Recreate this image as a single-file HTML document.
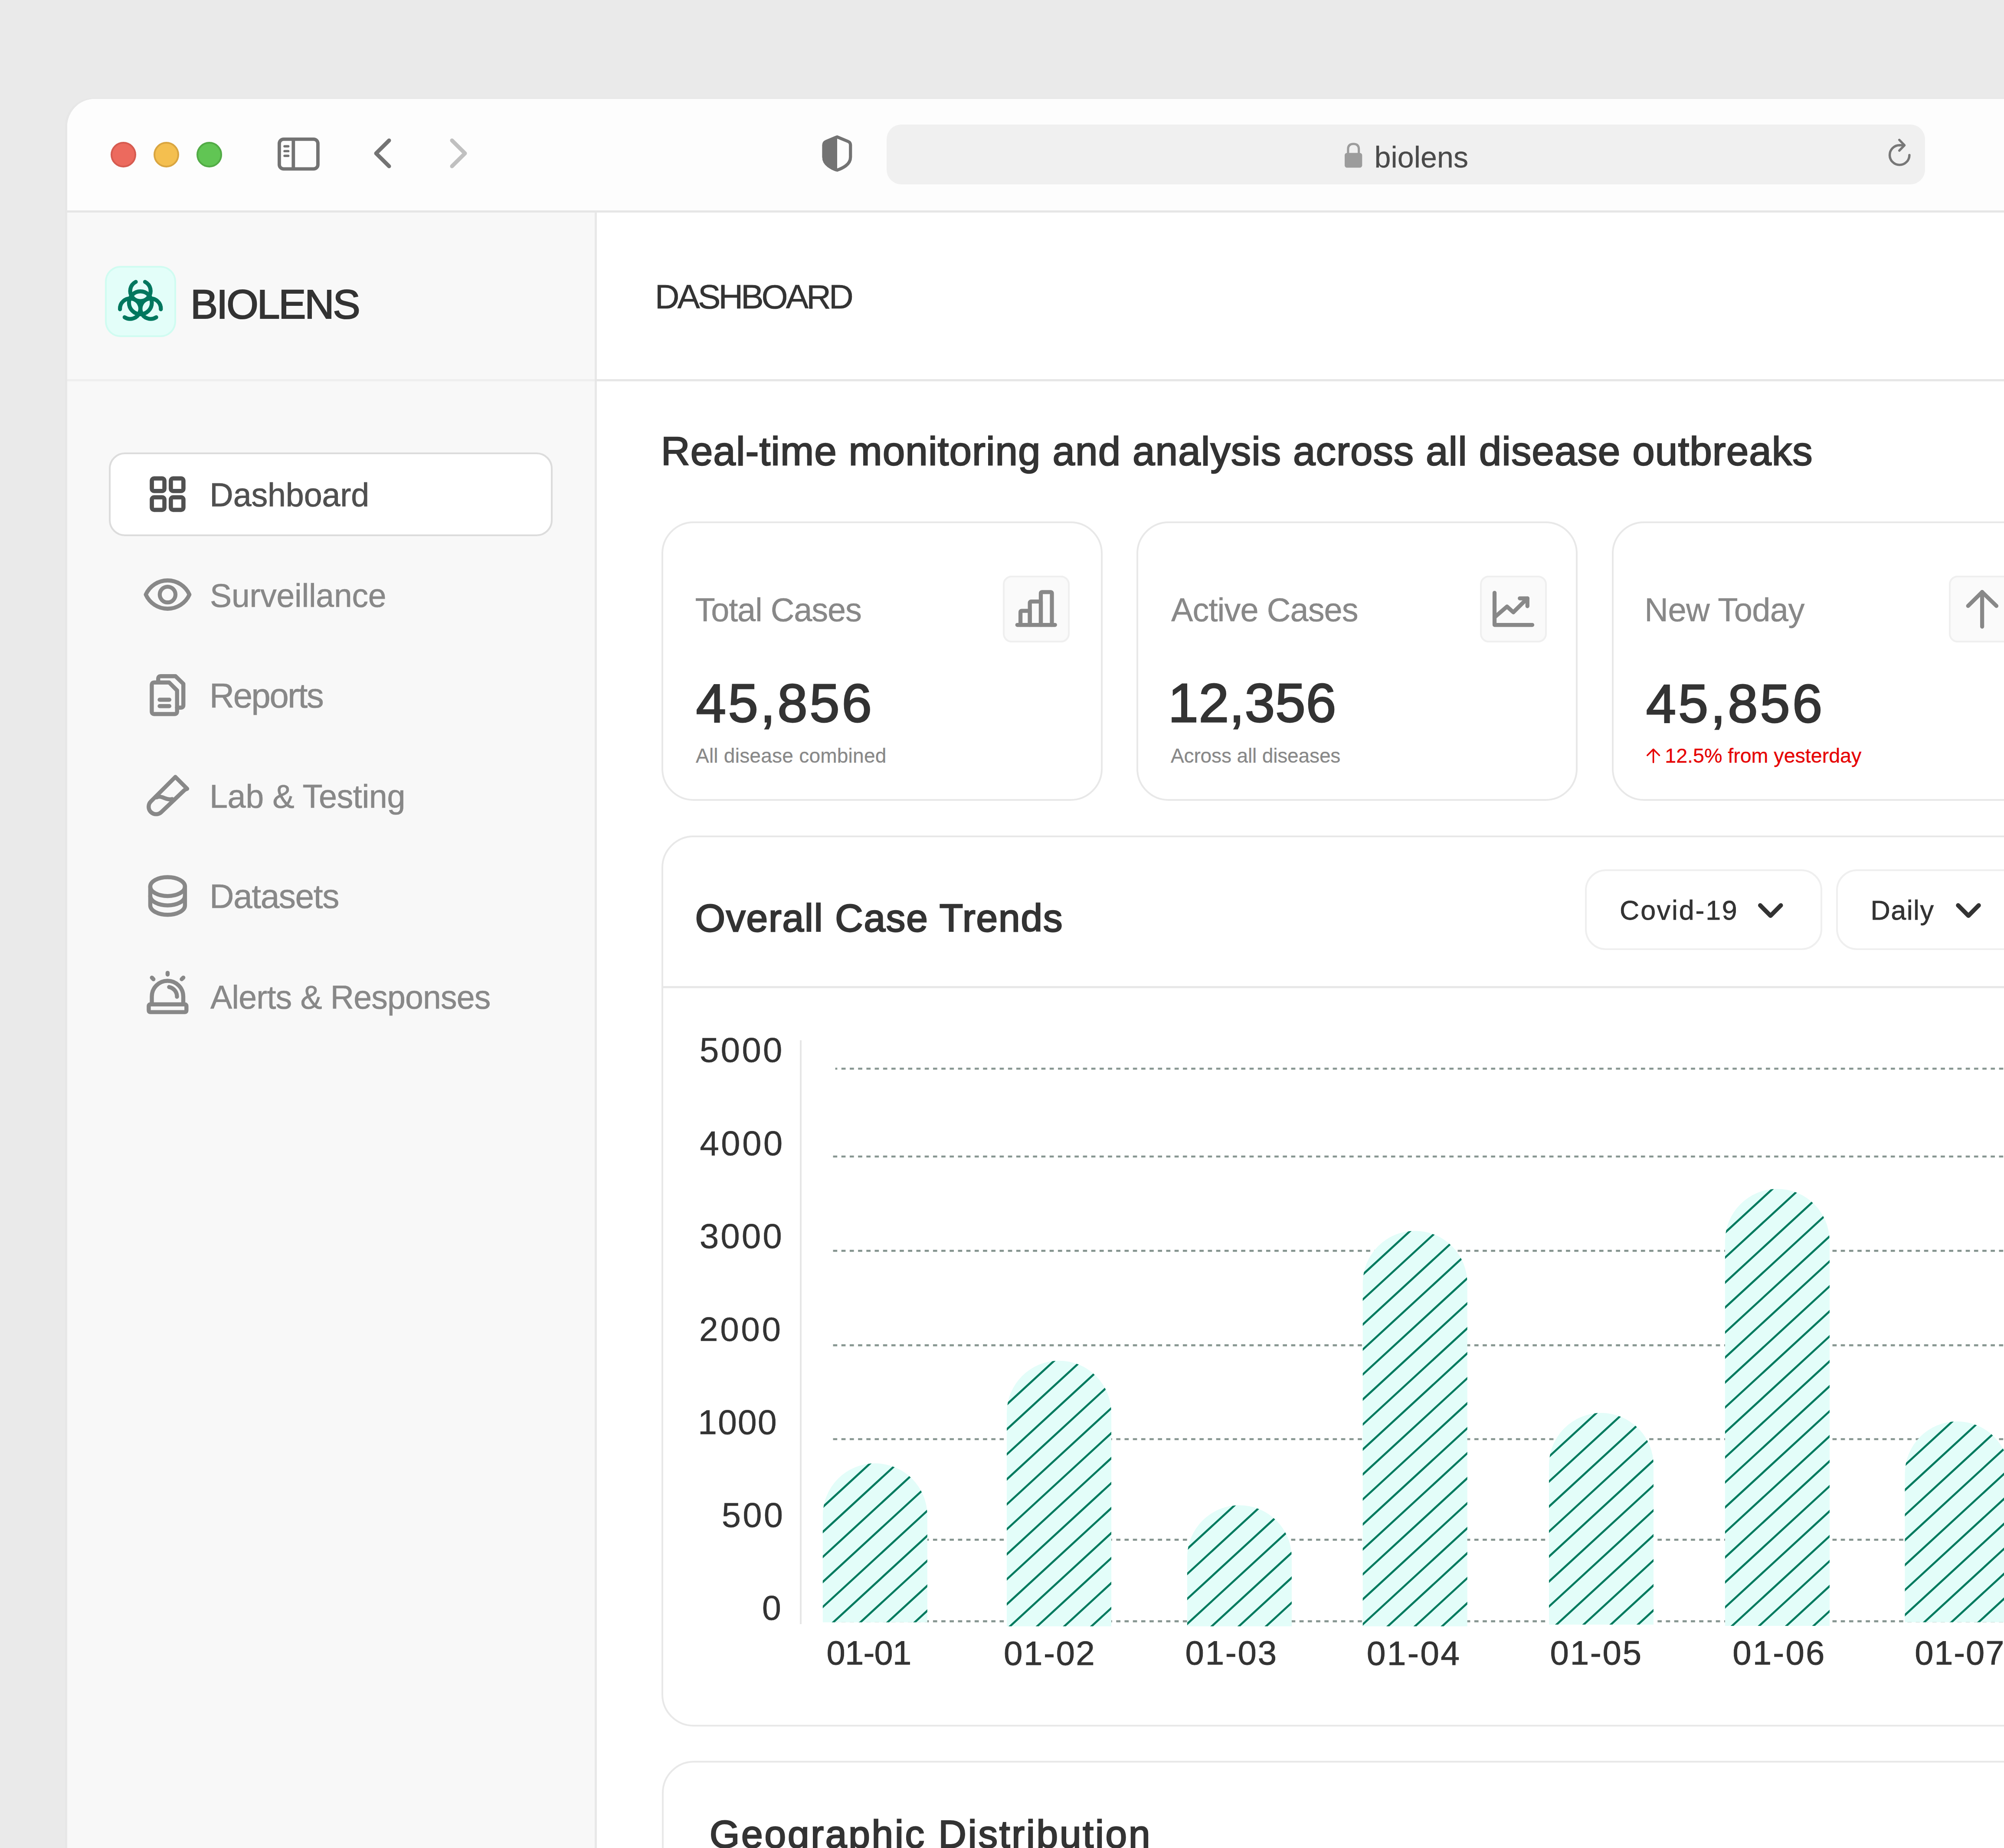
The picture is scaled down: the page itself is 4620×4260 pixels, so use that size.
<!DOCTYPE html>
<html><head><meta charset="utf-8"><style>
html,body{margin:0;padding:0;}
body{width:4620px;height:4260px;overflow:hidden;background:#eaeaea;position:relative;font-family:"Liberation Sans", sans-serif;}
.t{position:absolute;white-space:nowrap;font-weight:400;}
svg.ov{position:absolute;left:0;top:0;}
</style></head><body>
<div style="position:absolute;left:155px;top:228px;width:4565px;height:4172px;background:#ffffff;border-radius:64px 0 0 0;box-sizing:border-box;box-shadow:-5px -2px 0 0 #e7e7e7;"></div>
<div style="position:absolute;left:155px;top:228px;width:4565px;height:258px;background:#fdfdfd;border-radius:64px 0 0 0;box-sizing:border-box;"></div>
<div style="position:absolute;left:155px;top:485px;width:4565px;height:4.800000000000011px;background:#e6e6e6;border-radius:0;box-sizing:border-box;"></div>
<div style="position:absolute;left:254.5px;top:327.0px;width:59px;height:59px;border-radius:50%;background:#ec6a5e;box-sizing:border-box;border:4.5px solid #d65b50;"></div>
<div style="position:absolute;left:353.5px;top:327.0px;width:59px;height:59px;border-radius:50%;background:#f4bf4f;box-sizing:border-box;border:4.5px solid #d9a540;"></div>
<div style="position:absolute;left:452.5px;top:327.0px;width:59px;height:59px;border-radius:50%;background:#61c554;box-sizing:border-box;border:4.5px solid #52ab46;"></div>
<div style="position:absolute;left:2044px;top:287px;width:2394px;height:138px;background:#f0f0f0;border-radius:34px;box-sizing:border-box;"></div>
<div class="t" id="url" style="left:3168.54px;top:327.99px;font-size:68.02px;line-height:68.02px;color:#4a4a4a;letter-spacing:0.173px;-webkit-text-stroke:0.3px #4a4a4a;">biolens</div>
<div style="position:absolute;left:155px;top:489.8px;width:1217px;height:3910.2px;background:#f8f8f8;border-radius:0;box-sizing:border-box;"></div>
<div style="position:absolute;left:1371.2px;top:489.8px;width:4.399999999999864px;height:3910.2px;background:#e8e8e8;border-radius:0;box-sizing:border-box;"></div>
<div style="position:absolute;left:155px;top:874.2px;width:1216.2px;height:4.7999999999999545px;background:#efefef;border-radius:0;box-sizing:border-box;"></div>
<div style="position:absolute;left:1371.2px;top:874.2px;width:3348.8px;height:4.7999999999999545px;background:#e6e6e6;border-radius:0;box-sizing:border-box;"></div>
<div style="position:absolute;left:242px;top:613px;width:164px;height:164px;background:#e3fef9;border:4.6px solid #d0fcf1;border-radius:36px;box-sizing:border-box;"></div>
<div class="t" id="biolens_logo" style="left:438.98px;top:653.85px;font-size:94.65px;line-height:94.65px;color:#333333;letter-spacing:-3.109px;-webkit-text-stroke:2.2px #333333;">BIOLENS</div>
<div style="position:absolute;left:251px;top:1043px;width:1023px;height:193px;background:#ffffff;border:4.8px solid #dcdcdc;border-radius:37px;box-sizing:border-box;"></div>
<div class="t" id="nav0" style="left:483.32px;top:1104.08px;font-size:75.35px;line-height:75.35px;color:#505050;letter-spacing:-0.095px;-webkit-text-stroke:0.9px #505050;">Dashboard</div>
<div class="t" id="nav1" style="left:484.05px;top:1336.15px;font-size:75.04px;line-height:75.04px;color:#888888;letter-spacing:-0.211px;-webkit-text-stroke:0.7px #888888;">Surveillance</div>
<div class="t" id="nav2" style="left:482.85px;top:1564.11px;font-size:79.49px;line-height:79.49px;color:#888888;letter-spacing:-2.418px;-webkit-text-stroke:0.7px #888888;">Reports</div>
<div class="t" id="nav3" style="left:482.97px;top:1798.99px;font-size:75.50px;line-height:75.50px;color:#888888;letter-spacing:-0.392px;-webkit-text-stroke:0.7px #888888;">Lab &amp; Testing</div>
<div class="t" id="nav4" style="left:483.00px;top:2027.44px;font-size:78.27px;line-height:78.27px;color:#888888;letter-spacing:-1.363px;-webkit-text-stroke:0.7px #888888;">Datasets</div>
<div class="t" id="nav5" style="left:485.00px;top:2262.28px;font-size:75.18px;line-height:75.18px;color:#888888;letter-spacing:-0.805px;-webkit-text-stroke:0.7px #888888;">Alerts &amp; Responses</div>
<div class="t" id="hdr" style="left:1509.83px;top:644.72px;font-size:78.49px;line-height:78.49px;color:#333333;letter-spacing:-4.923px;-webkit-text-stroke:0.6px #333333;">DASHBOARD</div>
<div class="t" id="sub" style="left:1523.84px;top:993.56px;font-size:92.63px;line-height:92.63px;color:#333333;letter-spacing:1.067px;-webkit-text-stroke:2.4px #333333;">Real-time monitoring and analysis across all disease outbreaks</div>
<div style="position:absolute;left:1525px;top:1202px;width:1017px;height:644px;background:#fff;border:4.8px solid #e8e8e8;border-radius:74px;box-sizing:border-box;"></div>
<div style="position:absolute;left:2620px;top:1202px;width:1017px;height:644px;background:#fff;border:4.8px solid #e8e8e8;border-radius:74px;box-sizing:border-box;"></div>
<div style="position:absolute;left:3715.5px;top:1202px;width:1017.0px;height:644px;background:#fff;border:4.8px solid #e8e8e8;border-radius:74px;box-sizing:border-box;"></div>
<div style="position:absolute;left:2311.7px;top:1327.2px;width:154.0px;height:154.29999999999995px;background:#fafafa;border:4.7px solid #efefef;border-radius:20px;box-sizing:border-box;"></div>
<div style="position:absolute;left:3411.7px;top:1327.2px;width:154.0px;height:154.29999999999995px;background:#fafafa;border:4.7px solid #efefef;border-radius:20px;box-sizing:border-box;"></div>
<div style="position:absolute;left:4492.6px;top:1327.2px;width:154.0px;height:154.29999999999995px;background:#fafafa;border:4.7px solid #efefef;border-radius:20px;box-sizing:border-box;"></div>
<div class="t" id="c1l" style="left:1602.49px;top:1368.17px;font-size:75.68px;line-height:75.68px;color:#888888;letter-spacing:-1.103px;-webkit-text-stroke:0.5px #888888;">Total Cases</div>
<div class="t" id="c1v" style="left:1604.47px;top:1559.29px;font-size:124.81px;line-height:124.81px;color:#333333;letter-spacing:4.746px;-webkit-text-stroke:2.8px #333333;">45,856</div>
<div class="t" id="c1s" style="left:1603.97px;top:1719.11px;font-size:46.04px;line-height:46.04px;color:#888888;letter-spacing:0.231px;-webkit-text-stroke:0.3px #888888;">All disease combined</div>
<div class="t" id="c2l" style="left:2700.00px;top:1367.94px;font-size:75.68px;line-height:75.68px;color:#888888;letter-spacing:-0.909px;-webkit-text-stroke:0.5px #888888;">Active Cases</div>
<div class="t" id="c2v" style="left:2692.98px;top:1558.73px;font-size:125.36px;line-height:125.36px;color:#333333;letter-spacing:0.791px;-webkit-text-stroke:2.8px #333333;">12,356</div>
<div class="t" id="c2s" style="left:2699.02px;top:1719.11px;font-size:46.04px;line-height:46.04px;color:#888888;letter-spacing:-0.147px;-webkit-text-stroke:0.3px #888888;">Across all diseases</div>
<div class="t" id="c3l" style="left:3791.37px;top:1368.30px;font-size:75.86px;line-height:75.86px;color:#888888;letter-spacing:-0.615px;-webkit-text-stroke:0.5px #888888;">New Today</div>
<div class="t" id="c3v" style="left:3794.70px;top:1559.62px;font-size:124.46px;line-height:124.46px;color:#333333;letter-spacing:5.176px;-webkit-text-stroke:2.8px #333333;">45,856</div>
<div class="t" id="c3s" style="left:3838.31px;top:1718.55px;font-size:46.65px;line-height:46.65px;color:#e60000;letter-spacing:-0.036px;-webkit-text-stroke:0.3px #e60000;">12.5% from yesterday</div>
<div style="position:absolute;left:1525px;top:1925.6px;width:3195px;height:2054.9px;background:#fff;border:4.8px solid #e8e8e8;border-radius:74px;box-sizing:border-box;"></div>
<div style="position:absolute;left:1526px;top:2273px;width:3194px;height:4.5px;background:#e8e8e8;border-radius:0;box-sizing:border-box;"></div>
<div class="t" id="ttl" style="left:1602.83px;top:2071.78px;font-size:89.04px;line-height:89.04px;color:#333333;letter-spacing:1.949px;-webkit-text-stroke:2.8px #333333;">Overall Case Trends</div>
<div style="position:absolute;left:3653.7px;top:2003.7px;width:547.6999999999998px;height:186.79999999999995px;background:#fff;border:4.5px solid #efefef;border-radius:48px;box-sizing:border-box;"></div>
<div style="position:absolute;left:4232.7px;top:2003.7px;width:549.3000000000002px;height:186.79999999999995px;background:#fff;border:4.5px solid #efefef;border-radius:48px;box-sizing:border-box;"></div>
<div class="t" id="dd1" style="left:3734.12px;top:2066.87px;font-size:62.65px;line-height:62.65px;color:#333333;letter-spacing:2.840px;-webkit-text-stroke:0.8px #333333;">Covid-19</div>
<div class="t" id="dd2" style="left:4312.53px;top:2067.03px;font-size:62.84px;line-height:62.84px;color:#333333;letter-spacing:1.418px;-webkit-text-stroke:0.8px #333333;">Daily</div>
<div class="t" id="y5000" style="left:1612.83px;top:2380.20px;font-size:80.32px;line-height:80.32px;color:#333333;letter-spacing:3.988px;-webkit-text-stroke:0.5px #333333;">5000</div>
<div class="t" id="y4000" style="left:1613.15px;top:2595.25px;font-size:80.11px;line-height:80.11px;color:#333333;letter-spacing:4.341px;-webkit-text-stroke:0.5px #333333;">4000</div>
<div class="t" id="y3000" style="left:1612.67px;top:2809.47px;font-size:80.17px;line-height:80.17px;color:#333333;letter-spacing:3.985px;-webkit-text-stroke:0.5px #333333;">3000</div>
<div class="t" id="y2000" style="left:1612.09px;top:3025.12px;font-size:78.35px;line-height:78.35px;color:#333333;letter-spacing:4.568px;-webkit-text-stroke:0.5px #333333;">2000</div>
<div class="t" id="y1000" style="left:1609.03px;top:3239.44px;font-size:79.05px;line-height:79.05px;color:#333333;letter-spacing:1.945px;-webkit-text-stroke:0.5px #333333;">1000</div>
<div class="t" id="y500" style="left:1663.87px;top:3452.97px;font-size:79.60px;line-height:79.60px;color:#333333;letter-spacing:4.161px;-webkit-text-stroke:0.5px #333333;">500</div>
<div class="t" id="y0" style="left:1756.71px;top:3666.83px;font-size:79.44px;line-height:79.44px;color:#333333;letter-spacing:92.672px;-webkit-text-stroke:0.5px #333333;">0</div>
<div style="position:absolute;left:1844px;top:2398.2px;width:4px;height:1346.3000000000002px;background:#e6e6e6;border-radius:0;box-sizing:border-box;"></div>
<div class="t" id="x1" style="left:1905.55px;top:3772.05px;font-size:77.69px;line-height:77.69px;color:#333333;letter-spacing:-0.755px;-webkit-text-stroke:0.9px #333333;">01-01</div>
<div class="t" id="x2" style="left:2314.12px;top:3772.20px;font-size:78.20px;line-height:78.20px;color:#333333;letter-spacing:2.430px;-webkit-text-stroke:0.9px #333333;">01-02</div>
<div class="t" id="x3" style="left:2732.50px;top:3771.63px;font-size:77.94px;line-height:77.94px;color:#333333;letter-spacing:2.806px;-webkit-text-stroke:0.9px #333333;">01-03</div>
<div class="t" id="x4" style="left:3150.84px;top:3772.00px;font-size:78.71px;line-height:78.71px;color:#333333;letter-spacing:3.210px;-webkit-text-stroke:0.9px #333333;">01-04</div>
<div class="t" id="x5" style="left:3573.50px;top:3771.63px;font-size:77.94px;line-height:77.94px;color:#333333;letter-spacing:2.797px;-webkit-text-stroke:0.9px #333333;">01-05</div>
<div class="t" id="x6" style="left:3994.13px;top:3771.63px;font-size:77.94px;line-height:77.94px;color:#333333;letter-spacing:3.243px;-webkit-text-stroke:0.9px #333333;">01-06</div>
<div class="t" id="x7" style="left:4414.13px;top:3772.05px;font-size:77.69px;line-height:77.69px;color:#333333;letter-spacing:1.890px;-webkit-text-stroke:0.9px #333333;">01-07</div>
<div style="position:absolute;left:1525.5px;top:4058.5px;width:3194.5px;height:541.5px;background:#fff;border:4.8px solid #e8e8e8;border-radius:74px;box-sizing:border-box;"></div>
<div class="t" id="geo" style="left:1636.00px;top:4184.15px;font-size:89.04px;line-height:89.04px;color:#333333;letter-spacing:3.868px;-webkit-text-stroke:2.8px #333333;">Geographic Distribution</div>
<svg class="ov" width="4620" height="4260" viewBox="0 0 4620 4260">
<rect x="643.9" y="320.9" width="89" height="68.5" rx="10" fill="none" stroke="#737373" stroke-width="7.8"/>
<line x1="676.3" y1="321" x2="676.3" y2="389" stroke="#737373" stroke-width="7.8"/>
<line x1="656" y1="337.3" x2="664.6" y2="337.3" stroke="#737373" stroke-width="5.4" stroke-linecap="round"/>
<line x1="656" y1="348.4" x2="664.6" y2="348.4" stroke="#737373" stroke-width="5.4" stroke-linecap="round"/>
<line x1="656" y1="359.3" x2="664.6" y2="359.3" stroke="#737373" stroke-width="5.4" stroke-linecap="round"/>
<path d="M897 323.7 L867 353.5 L897 383.3" fill="none" stroke="#737373" stroke-width="9" stroke-linecap="round" stroke-linejoin="round"/>
<path d="M1042 323.7 L1072 353.5 L1042 383.3" fill="none" stroke="#c0c0c0" stroke-width="9" stroke-linecap="round" stroke-linejoin="round"/>
<path d="M1930 315.6 L1955 326 Q1960.7 328.5 1960.7 334 L1960.7 362 Q1960.7 374 1950 382 Q1942 388 1930 392.2 Q1918 388 1910 382 Q1899.2 374 1899.2 362 L1899.2 334 Q1899.2 328.5 1905 326 Z" fill="none" stroke="#737373" stroke-width="7.2" stroke-linejoin="round"/>
<path d="M1926.4 317.1 L1905 326 Q1899.2 328.5 1899.2 334 L1899.2 362 Q1899.2 374 1910 382 Q1918 388 1926.4 391 Z" fill="#737373" stroke="#737373" stroke-width="7.2" stroke-linejoin="round"/>
<path d="M3107.8 353 L3107.8 344 Q3107.8 331.8 3120.2 331.8 Q3132.6 331.8 3132.6 344 L3132.6 353" fill="none" stroke="#9c9c9c" stroke-width="5.1"/>
<rect x="3100" y="352.5" width="40.3" height="34.1" rx="5.4" fill="#9c9c9c"/>
<path d="M4379.2 334.7 A22.7 22.7 0 1 0 4401.9 357.4" fill="none" stroke="#777" stroke-width="5.4" stroke-linecap="round"/>
<path d="M4378.7 322.5 L4390.6 334.9 L4378.7 347.1" fill="none" stroke="#777" stroke-width="5.4" stroke-linecap="round" stroke-linejoin="round"/>
<line x1="4379" y1="334.7" x2="4389" y2="334.9" stroke="#777" stroke-width="5.4"/>
<path d="M313.03 649.76 A23.5 23.5 0 1 0 334.37 649.76" fill="none" stroke="#00775e" stroke-width="9.2" stroke-linecap="round"/>
<path d="M287.26 731.36 A23.5 23.5 0 1 0 276.59 712.88" fill="none" stroke="#00775e" stroke-width="9.2" stroke-linecap="round"/>
<path d="M370.81 712.88 A23.5 23.5 0 1 0 360.14 731.36" fill="none" stroke="#00775e" stroke-width="9.2" stroke-linecap="round"/>
<circle cx="323.7" cy="698.0" r="26.3" fill="none" stroke="#00775e" stroke-width="9.2"/>
<path d="M4058 2087 L4081.8 2111 L4105.5 2087" fill="none" stroke="#333" stroke-width="10" stroke-linecap="round" stroke-linejoin="round"/>
<path d="M4514.2 2087 L4538 2111 L4561.7 2087" fill="none" stroke="#333" stroke-width="10" stroke-linecap="round" stroke-linejoin="round"/>
<line x1="1925.6" y1="2463.5" x2="4620" y2="2463.5" stroke="#879691" stroke-width="4.7" stroke-dasharray="9.7 9.5" stroke-dashoffset="5"/>
<line x1="1920.5" y1="2666" x2="4620" y2="2666" stroke="#879691" stroke-width="4.7" stroke-dasharray="9.7 9.5" stroke-dashoffset="0"/>
<line x1="1920.5" y1="2883.4" x2="4620" y2="2883.4" stroke="#879691" stroke-width="4.7" stroke-dasharray="9.7 9.5" stroke-dashoffset="0"/>
<line x1="1920.5" y1="3101.2" x2="4620" y2="3101.2" stroke="#879691" stroke-width="4.7" stroke-dasharray="9.7 9.5" stroke-dashoffset="0"/>
<line x1="1920.5" y1="3317.5" x2="4620" y2="3317.5" stroke="#879691" stroke-width="4.7" stroke-dasharray="9.7 9.5" stroke-dashoffset="0"/>
<line x1="1920.5" y1="3549.3" x2="4620" y2="3549.3" stroke="#879691" stroke-width="4.7" stroke-dasharray="9.7 9.5" stroke-dashoffset="0"/>
<line x1="1920.5" y1="3737.4" x2="4620" y2="3737.4" stroke="#879691" stroke-width="4.7" stroke-dasharray="9.7 9.5" stroke-dashoffset="0"/>
<clipPath id="c0"><path d="M1896.8 3739.7 L1896.8 3493.7 A120.5 120.5 0 0 1 2137.8 3493.7 L2137.8 3739.7 Z"/></clipPath>
<path d="M1896.8 3739.7 L1896.8 3493.7 A120.5 120.5 0 0 1 2137.8 3493.7 L2137.8 3739.7 Z" fill="#e3fdf9"/>
<path clip-path="url(#c0)" d="M1795.9 3336.4 L1346.7 3749.7 M1858.5 3336.4 L1409.3 3749.7 M1921.1 3336.4 L1471.9 3749.7 M1983.7 3336.4 L1534.5 3749.7 M2046.3 3336.4 L1597.1 3749.7 M2108.9 3336.4 L1659.7 3749.7 M2171.5 3336.4 L1722.3 3749.7 M2234.1 3336.4 L1784.9 3749.7 M2296.7 3336.4 L1847.5 3749.7 M2359.3 3336.4 L1910.1 3749.7 M2421.9 3336.4 L1972.7 3749.7 M2484.5 3336.4 L2035.3 3749.7 M2547.1 3336.4 L2097.9 3749.7 M2609.7 3336.4 L2160.5 3749.7 M2672.3 3336.4 L2223.1 3749.7 M2734.9 3336.4 L2285.7 3749.7 M2797.5 3336.4 L2348.3 3749.7 M2860.1 3336.4 L2410.9 3749.7" stroke="#007a5e" stroke-width="4.7" fill="none"/>
<clipPath id="c1"><path d="M2321 3749.1 L2321 3257.2 A120.5 120.5 0 0 1 2562 3257.2 L2562 3749.1 Z"/></clipPath>
<path d="M2321 3749.1 L2321 3257.2 A120.5 120.5 0 0 1 2562 3257.2 L2562 3749.1 Z" fill="#e3fdf9"/>
<path clip-path="url(#c1)" d="M2220.1 3099.9 L1503.6 3759.1 M2282.7 3099.9 L1566.2 3759.1 M2345.3 3099.9 L1628.8 3759.1 M2407.9 3099.9 L1691.4 3759.1 M2470.5 3099.9 L1754.0 3759.1 M2533.1 3099.9 L1816.6 3759.1 M2595.7 3099.9 L1879.2 3759.1 M2658.3 3099.9 L1941.8 3759.1 M2720.9 3099.9 L2004.4 3759.1 M2783.5 3099.9 L2067.0 3759.1 M2846.1 3099.9 L2129.6 3759.1 M2908.7 3099.9 L2192.2 3759.1 M2971.3 3099.9 L2254.8 3759.1 M3033.9 3099.9 L2317.4 3759.1 M3096.5 3099.9 L2380.0 3759.1 M3159.1 3099.9 L2442.6 3759.1 M3221.7 3099.9 L2505.2 3759.1 M3284.3 3099.9 L2567.8 3759.1 M3346.9 3099.9 L2630.4 3759.1 M3409.5 3099.9 L2693.0 3759.1 M3472.1 3099.9 L2755.6 3759.1 M3534.7 3099.9 L2818.2 3759.1" stroke="#007a5e" stroke-width="4.7" fill="none"/>
<clipPath id="c2"><path d="M2736.9 3749 L2736.9 3590.4 A120.5 120.5 0 0 1 2977.9 3590.4 L2977.9 3749 Z"/></clipPath>
<path d="M2736.9 3749 L2736.9 3590.4 A120.5 120.5 0 0 1 2977.9 3590.4 L2977.9 3749 Z" fill="#e3fdf9"/>
<path clip-path="url(#c2)" d="M2636.0 3433.1 L2281.8 3759.0 M2698.6 3433.1 L2344.4 3759.0 M2761.2 3433.1 L2407.0 3759.0 M2823.8 3433.1 L2469.6 3759.0 M2886.4 3433.1 L2532.2 3759.0 M2949.0 3433.1 L2594.8 3759.0 M3011.6 3433.1 L2657.4 3759.0 M3074.2 3433.1 L2720.0 3759.0 M3136.8 3433.1 L2782.6 3759.0 M3199.4 3433.1 L2845.2 3759.0 M3262.0 3433.1 L2907.8 3759.0 M3324.6 3433.1 L2970.4 3759.0 M3387.2 3433.1 L3033.0 3759.0 M3449.8 3433.1 L3095.6 3759.0 M3512.4 3433.1 L3158.2 3759.0 M3575.0 3433.1 L3220.8 3759.0" stroke="#007a5e" stroke-width="4.7" fill="none"/>
<clipPath id="c3"><path d="M3141.7 3749 L3141.7 2957.9 A120.5 120.5 0 0 1 3382.7 2957.9 L3382.7 3749 Z"/></clipPath>
<path d="M3141.7 3749 L3141.7 2957.9 A120.5 120.5 0 0 1 3382.7 2957.9 L3382.7 3749 Z" fill="#e3fdf9"/>
<path clip-path="url(#c3)" d="M3040.8 2800.6 L1999.1 3759.0 M3103.4 2800.6 L2061.7 3759.0 M3166.0 2800.6 L2124.3 3759.0 M3228.6 2800.6 L2186.9 3759.0 M3291.2 2800.6 L2249.5 3759.0 M3353.8 2800.6 L2312.1 3759.0 M3416.4 2800.6 L2374.7 3759.0 M3479.0 2800.6 L2437.3 3759.0 M3541.6 2800.6 L2499.9 3759.0 M3604.2 2800.6 L2562.5 3759.0 M3666.8 2800.6 L2625.1 3759.0 M3729.4 2800.6 L2687.7 3759.0 M3792.0 2800.6 L2750.3 3759.0 M3854.6 2800.6 L2812.9 3759.0 M3917.2 2800.6 L2875.5 3759.0 M3979.8 2800.6 L2938.1 3759.0 M4042.4 2800.6 L3000.7 3759.0 M4105.0 2800.6 L3063.3 3759.0 M4167.6 2800.6 L3125.9 3759.0 M4230.2 2800.6 L3188.5 3759.0 M4292.8 2800.6 L3251.1 3759.0 M4355.4 2800.6 L3313.7 3759.0 M4418.0 2800.6 L3376.3 3759.0 M4480.6 2800.6 L3438.9 3759.0 M4543.2 2800.6 L3501.5 3759.0 M4605.8 2800.6 L3564.1 3759.0 M4668.4 2800.6 L3626.7 3759.0" stroke="#007a5e" stroke-width="4.7" fill="none"/>
<clipPath id="c4"><path d="M3571 3745 L3571 3377.6 A120.5 120.5 0 0 1 3812 3377.6 L3812 3745 Z"/></clipPath>
<path d="M3571 3745 L3571 3377.6 A120.5 120.5 0 0 1 3812 3377.6 L3812 3745 Z" fill="#e3fdf9"/>
<path clip-path="url(#c4)" d="M3470.1 3220.3 L2888.9 3755.0 M3532.7 3220.3 L2951.5 3755.0 M3595.3 3220.3 L3014.1 3755.0 M3657.9 3220.3 L3076.7 3755.0 M3720.5 3220.3 L3139.3 3755.0 M3783.1 3220.3 L3201.9 3755.0 M3845.7 3220.3 L3264.5 3755.0 M3908.3 3220.3 L3327.1 3755.0 M3970.9 3220.3 L3389.7 3755.0 M4033.5 3220.3 L3452.3 3755.0 M4096.1 3220.3 L3514.9 3755.0 M4158.7 3220.3 L3577.5 3755.0 M4221.3 3220.3 L3640.1 3755.0 M4283.9 3220.3 L3702.7 3755.0 M4346.5 3220.3 L3765.3 3755.0 M4409.1 3220.3 L3827.9 3755.0 M4471.7 3220.3 L3890.5 3755.0 M4534.3 3220.3 L3953.1 3755.0 M4596.9 3220.3 L4015.7 3755.0 M4659.5 3220.3 L4078.3 3755.0" stroke="#007a5e" stroke-width="4.7" fill="none"/>
<clipPath id="c5"><path d="M3976.9 3748 L3976.9 2861.2 A120.5 120.5 0 0 1 4217.9 2861.2 L4217.9 3748 Z"/></clipPath>
<path d="M3976.9 3748 L3976.9 2861.2 A120.5 120.5 0 0 1 4217.9 2861.2 L4217.9 3748 Z" fill="#e3fdf9"/>
<path clip-path="url(#c5)" d="M3876.0 2703.9 L2730.2 3758.0 M3938.6 2703.9 L2792.8 3758.0 M4001.2 2703.9 L2855.4 3758.0 M4063.8 2703.9 L2918.0 3758.0 M4126.4 2703.9 L2980.6 3758.0 M4189.0 2703.9 L3043.2 3758.0 M4251.6 2703.9 L3105.8 3758.0 M4314.2 2703.9 L3168.4 3758.0 M4376.8 2703.9 L3231.0 3758.0 M4439.4 2703.9 L3293.6 3758.0 M4502.0 2703.9 L3356.2 3758.0 M4564.6 2703.9 L3418.8 3758.0 M4627.2 2703.9 L3481.4 3758.0 M4689.8 2703.9 L3544.0 3758.0 M4752.4 2703.9 L3606.6 3758.0 M4815.0 2703.9 L3669.2 3758.0 M4877.6 2703.9 L3731.8 3758.0 M4940.2 2703.9 L3794.4 3758.0 M5002.8 2703.9 L3857.0 3758.0 M5065.4 2703.9 L3919.6 3758.0 M5128.0 2703.9 L3982.2 3758.0 M5190.6 2703.9 L4044.8 3758.0 M5253.2 2703.9 L4107.4 3758.0 M5315.8 2703.9 L4170.0 3758.0 M5378.4 2703.9 L4232.6 3758.0 M5441.0 2703.9 L4295.2 3758.0 M5503.6 2703.9 L4357.8 3758.0 M5566.2 2703.9 L4420.4 3758.0 M5628.8 2703.9 L4483.0 3758.0" stroke="#007a5e" stroke-width="4.7" fill="none"/>
<clipPath id="c6"><path d="M4391.5 3739.5 L4391.5 3397.2 A120.5 120.5 0 0 1 4632.5 3397.2 L4632.5 3739.5 Z"/></clipPath>
<path d="M4391.5 3739.5 L4391.5 3397.2 A120.5 120.5 0 0 1 4632.5 3397.2 L4632.5 3739.5 Z" fill="#e3fdf9"/>
<path clip-path="url(#c6)" d="M4290.6 3239.9 L3736.7 3749.5 M4353.2 3239.9 L3799.3 3749.5 M4415.8 3239.9 L3861.9 3749.5 M4478.4 3239.9 L3924.5 3749.5 M4541.0 3239.9 L3987.1 3749.5 M4603.6 3239.9 L4049.7 3749.5 M4666.2 3239.9 L4112.3 3749.5 M4728.8 3239.9 L4174.9 3749.5 M4791.4 3239.9 L4237.5 3749.5 M4854.0 3239.9 L4300.1 3749.5 M4916.6 3239.9 L4362.7 3749.5 M4979.2 3239.9 L4425.3 3749.5 M5041.8 3239.9 L4487.9 3749.5 M5104.4 3239.9 L4550.5 3749.5 M5167.0 3239.9 L4613.1 3749.5 M5229.6 3239.9 L4675.7 3749.5 M5292.2 3239.9 L4738.3 3749.5 M5354.8 3239.9 L4800.9 3749.5 M5417.4 3239.9 L4863.5 3749.5" stroke="#007a5e" stroke-width="4.7" fill="none"/>
<rect x="350.05" y="1102.85" width="29" height="29" rx="5" fill="none" stroke="#505050" stroke-width="9.7"/>
<rect x="393.85" y="1102.85" width="29" height="29" rx="5" fill="none" stroke="#505050" stroke-width="9.7"/>
<rect x="350.05" y="1146.35" width="29" height="29" rx="5" fill="none" stroke="#505050" stroke-width="9.7"/>
<rect x="393.85" y="1146.35" width="29" height="29" rx="5" fill="none" stroke="#505050" stroke-width="9.7"/>
<path d="M336.1 1370.6 A55.1 55.1 0 0 1 436.7 1370.6 A55.1 55.1 0 0 1 336.1 1370.6 Z" fill="none" stroke="#888888" stroke-width="9.4" stroke-linecap="round" stroke-linejoin="round" />
<circle cx="386.4" cy="1370.6" r="18.1" fill="none" stroke="#888888" stroke-width="9.2"/>
<path d="M364.7 1573.3 L364.7 1564.7 Q364.7 1558.7 370.7 1558.7 L404.5 1558.7 L422.7 1576.3 L422.7 1625.2 Q422.7 1631.2 416.7 1631.2 L408.2 1631.2" fill="none" stroke="#888888" stroke-width="9.4" stroke-linecap="round" stroke-linejoin="round" />
<path d="M355.9 1573.3 L389.9 1573.3 L408.2 1591.6 L408.2 1640 Q408.2 1646 402.2 1646 L355.9 1646 Q349.9 1646 349.9 1640 L349.9 1579.3 Q349.9 1573.3 355.9 1573.3 Z" fill="none" stroke="#888888" stroke-width="9.4" stroke-linecap="round" stroke-linejoin="round" />
<path d="M368 1613 L390.4 1613" fill="none" stroke="#888888" stroke-width="9.4" stroke-linecap="round" stroke-linejoin="round" />
<path d="M368 1627.7 L390.4 1627.7" fill="none" stroke="#888888" stroke-width="9.4" stroke-linecap="round" stroke-linejoin="round" />
<path d="M404.3 1791 L431.5 1818.2 Q427 1819.5 424.5 1822 L372.1 1871.9 A17.2 17.2 0 0 1 347.75 1847.55 Z" fill="none" stroke="#888888" stroke-width="9.4" stroke-linecap="round" stroke-linejoin="round" />
<path d="M361 1838 C372 1832 383 1846 397 1842" fill="none" stroke="#888888" stroke-width="9.4" stroke-linecap="round" stroke-linejoin="round" />
<ellipse cx="386.4" cy="2043.8" rx="40" ry="21.8" fill="none" stroke="#888888" stroke-width="9.4"/>
<path d="M346.4 2043.8 L346.4 2087 A40 21.8 0 0 0 426.4 2087 L426.4 2043.8" fill="none" stroke="#888888" stroke-width="9.4" stroke-linecap="round" stroke-linejoin="round" />
<path d="M346.4 2065.3 A40 21.8 0 0 0 426.4 2065.3" fill="none" stroke="#888888" stroke-width="9.4" stroke-linecap="round" stroke-linejoin="round" />
<path d="M342.9 2319.3 Q342.9 2315.3 346.9 2315.3 L425.8 2315.3 Q429.8 2315.3 429.8 2319.3 L429.8 2329.1 Q429.8 2333.1 425.8 2333.1 L346.9 2333.1 Q342.9 2333.1 342.9 2329.1 Z" fill="none" stroke="#888888" stroke-width="9.4" stroke-linecap="round" stroke-linejoin="round" />
<path d="M350 2315.3 L350 2297.2 A36.2 36.2 0 0 1 422.5 2297.2 L422.5 2315.3" fill="none" stroke="#888888" stroke-width="9.4" stroke-linecap="round" stroke-linejoin="round" />
<path d="M389.9 2275.3 A22.2 22.2 0 0 1 408 2297.7" fill="none" stroke="#888888" stroke-width="9.4" stroke-linecap="round" stroke-linejoin="round" />
<path d="M386.4 2242.6 L386.4 2246.5" fill="none" stroke="#888888" stroke-width="9.4" stroke-linecap="round" stroke-linejoin="round" />
<path d="M350.2 2253.6 L353.7 2257.3" fill="none" stroke="#888888" stroke-width="9.4" stroke-linecap="round" stroke-linejoin="round" />
<path d="M422.6 2253.6 L418.9 2257.3" fill="none" stroke="#888888" stroke-width="9.4" stroke-linecap="round" stroke-linejoin="round" />
<path d="M3811.6 1757.5 L3811.6 1727.5 M3797.8 1741.3 L3811.6 1727.3 L3825.4 1741.3" fill="none" stroke="#e60000" stroke-width="3.6" stroke-linecap="round" stroke-linejoin="round"/>
<path d="M2345.3 1440.6 L2432.2 1440.6" fill="none" stroke="#888888" stroke-width="9.25" stroke-linecap="round" stroke-linejoin="round" />
<path d="M2352.6 1440.6 L2352.6 1411 Q2352.6 1408 2355.6 1408 L2374.2 1408 L2374.2 1440.6" fill="none" stroke="#888888" stroke-width="9.25" stroke-linecap="round" stroke-linejoin="round" />
<path d="M2374.2 1440.6 L2374.2 1389.7 Q2374.2 1386.7 2377.2 1386.7 L2399.5 1386.7 L2399.5 1440.6" fill="none" stroke="#888888" stroke-width="9.25" stroke-linecap="round" stroke-linejoin="round" />
<path d="M2399.5 1440.6 L2399.5 1367.8 Q2399.5 1364.8 2402.5 1364.8 L2422 1364.8 Q2425 1364.8 2425 1367.8 L2425 1440.6" fill="none" stroke="#888888" stroke-width="9.25" stroke-linecap="round" stroke-linejoin="round" />
<path d="M3445.5 1366.6 L3445.5 1440.6 L3532.5 1440.6" fill="none" stroke="#888888" stroke-width="9.25" stroke-linecap="round" stroke-linejoin="round" />
<path d="M3445.5 1423.1 L3474.2 1398.3 L3488.8 1411.4 L3521.3 1379.3" fill="none" stroke="#888888" stroke-width="9.25" stroke-linecap="round" stroke-linejoin="round" />
<path d="M3503.7 1379.3 L3521.3 1379.3 L3521.3 1397.3" fill="none" stroke="#888888" stroke-width="9.25" stroke-linecap="round" stroke-linejoin="round" />
<path d="M4569.6 1444.5 L4569.6 1364.7" fill="none" stroke="#888888" stroke-width="9.25" stroke-linecap="round" stroke-linejoin="round" />
<path d="M4537.2 1396.8 L4569.6 1364.7 L4602.5 1396.8" fill="none" stroke="#888888" stroke-width="9.25" stroke-linecap="round" stroke-linejoin="round" />
</svg>
</body></html>
